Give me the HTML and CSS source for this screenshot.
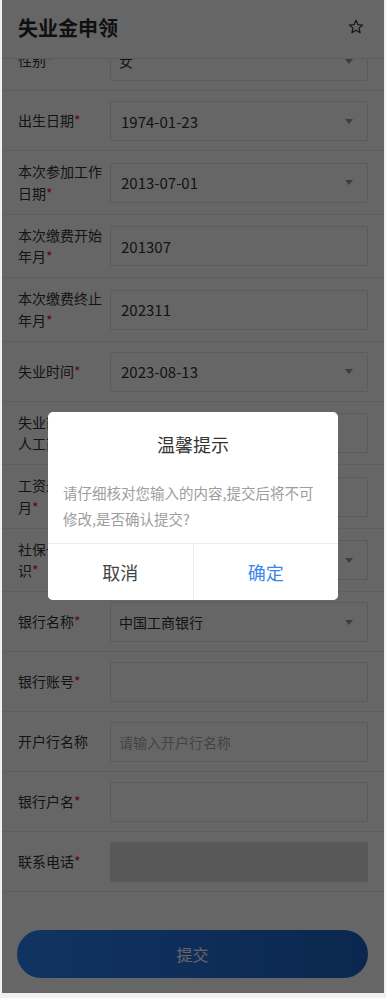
FILE: index.html
```html
<!DOCTYPE html>
<html lang="zh-CN">
<head>
<meta charset="utf-8">
<title>失业金申领</title>
<link rel="stylesheet" href="styles.css">
</head>
<body>
<div class="screen">
  <header class="topbar">
    <h1 class="title">失业金申领</h1>
    <svg class="star" width="16" height="16" viewBox="0 0 16 16" aria-hidden="true">
      <path d="M8 1.3 L9.9 5.6 L14.5 6.0 L11 9.1 L12.1 13.7 L8 11.3 L3.9 13.7 L5 9.1 L1.5 6.0 L6.1 5.6 Z" fill="none" stroke="#333" stroke-width="1.2" stroke-linejoin="round"/>
    </svg>
  </header>
  <div class="viewport">
    <form class="form">
      <div class="row"><div class="label">性别<span class="req">*</span></div><div class="field select"><span class="val">女</span><i class="caret"></i></div></div>
      <div class="row"><div class="label">出生日期<span class="req">*</span></div><div class="field select"><span class="val num">1974-01-23</span><i class="caret"></i></div></div>
      <div class="row"><div class="label">本次参加工作日期<span class="req">*</span></div><div class="field select"><span class="val num">2013-07-01</span><i class="caret"></i></div></div>
      <div class="row"><div class="label">本次缴费开始年月<span class="req">*</span></div><div class="field"><span class="val num">201307</span></div></div>
      <div class="row"><div class="label">本次缴费终止年月<span class="req">*</span></div><div class="field"><span class="val num">202311</span></div></div>
      <div class="row"><div class="label">失业时间<span class="req">*</span></div><div class="field select"><span class="val num">2023-08-13</span><i class="caret"></i></div></div>
      <div class="row"><div class="label">失业前是否个人工商户<span class="req">*</span></div><div class="field"><span class="val"></span></div></div>
      <div class="row"><div class="label">工资最后发放月<span class="req">*</span></div><div class="field"><span class="val"></span></div></div>
      <div class="row"><div class="label">社保卡激活标识<span class="req">*</span></div><div class="field select"><span class="val"></span><i class="caret"></i></div></div>
      <div class="row"><div class="label">银行名称<span class="req">*</span></div><div class="field select"><span class="val">中国工商银行</span><i class="caret"></i></div></div>
      <div class="row"><div class="label">银行账号<span class="req">*</span></div><div class="field"><span class="val"></span></div></div>
      <div class="row"><div class="label">开户行名称</div><div class="field"><span class="val placeholder">请输入开户行名称</span></div></div>
      <div class="row"><div class="label">银行户名<span class="req">*</span></div><div class="field"><span class="val"></span></div></div>
      <div class="row"><div class="label">联系电话<span class="req">*</span></div><div class="field disabled"><span class="val"></span></div></div>
      <div class="actions"><button type="button" class="submit">提交</button></div>
    </form>
  </div>
  <div class="mask"></div>
  <div class="dialog" role="dialog">
    <div class="dialog-title">温馨提示</div>
    <div class="dialog-msg">请仔细核对您输入的内容,提交后将不可修改,是否确认提交?</div>
    <div class="dialog-btns">
      <button type="button" class="dbtn cancel">取消</button>
      <button type="button" class="dbtn ok">确定</button>
    </div>
  </div>
</div>
</body>
</html>
```
FILE: styles.css
```css
* { box-sizing: border-box; }
html, body { margin: 0; padding: 0; }
body {
  background: #f0f0f0;
  font-family: "Noto Sans CJK SC", "Noto Sans", sans-serif;
  color: #333;
}
.screen {
  position: relative;
  width: 382px;
  height: 993px;
  margin-left: 2px;
  background: #fff;
  overflow: hidden;
  display: flex;
  flex-direction: column;
}
.topbar {
  flex: none;
  height: 59px;
  border-bottom: 1px solid #e6e6e6;
  display: flex;
  align-items: center;
  justify-content: space-between;
  padding: 0 20px 0 16px;
  background: #fff;
}
.title {
  margin: 0;
  font-size: 20px;
  font-weight: 700;
  color: #2a2a2a;
  line-height: 24px;
  margin-top: -3px;
}
.star { display: block; margin-top: -4px; }
.viewport {
  flex: 1;
  overflow: hidden;
}
.form {
  margin-top: -28px;
}
.row {
  display: flex;
  align-items: center;
  padding: 10px 16px 9px 16px;
  border-bottom: 1px solid #ececec;
}
.label {
  flex: none;
  width: 92px;
  font-size: 14px;
  line-height: 21.75px;
  color: #333;
}
.req { color: #e02020; }
.field {
  flex: 1;
  height: 40px;
  border: 1px solid #e4e4e4;
  border-radius: 2px;
  display: flex;
  align-items: center;
  padding: 0 14px 0 8px;
  font-size: 14px;
  color: #333;
}
.val { flex: 1; }
.num { font-size: 15px; padding-left: 2px; }
.placeholder { color: #aaa; }
.caret {
  flex: none;
  width: 0;
  height: 0;
  border-left: 4px solid transparent;
  border-right: 4px solid transparent;
  border-top: 5px solid #999;
}
.disabled {
  background: #dcdcdc;
  border-color: #dcdcdc;
}
.actions {
  padding: 38px 16px 0 15px;
}
.submit {
  display: block;
  width: 100%;
  height: 48px;
  border: none;
  border-radius: 24px;
  background: linear-gradient(90deg, #2a82f4, #1c62c6);
  color: #fff;
  font-family: inherit;
  font-size: 16px;
}
.mask {
  position: absolute;
  inset: 0;
  background: rgba(0, 0, 0, 0.6);
}
.dialog {
  position: absolute;
  left: 46px;
  top: 412px;
  width: 290px;
  background: #fff;
  border-radius: 5px;
  overflow: hidden;
}
.dialog-title {
  padding-top: 20px;
  font-size: 18px;
  line-height: 24px;
  text-align: center;
  color: #333;
}
.dialog-msg {
  margin-top: 24px;
  padding: 0 15px 11px 15px;
  font-size: 14.5px;
  line-height: 26px;
  color: #9d9d9d;
}
.dialog-btns {
  display: flex;
  border-top: 1px solid #ececec;
}
.dbtn {
  flex: 1;
  height: 56px;
  border: none;
  background: #fff;
  font-family: inherit;
  font-size: 18px;
  color: #444;
}
.dbtn + .dbtn { border-left: 1px solid #ececec; }
.ok { color: #3c84ee; }
```
